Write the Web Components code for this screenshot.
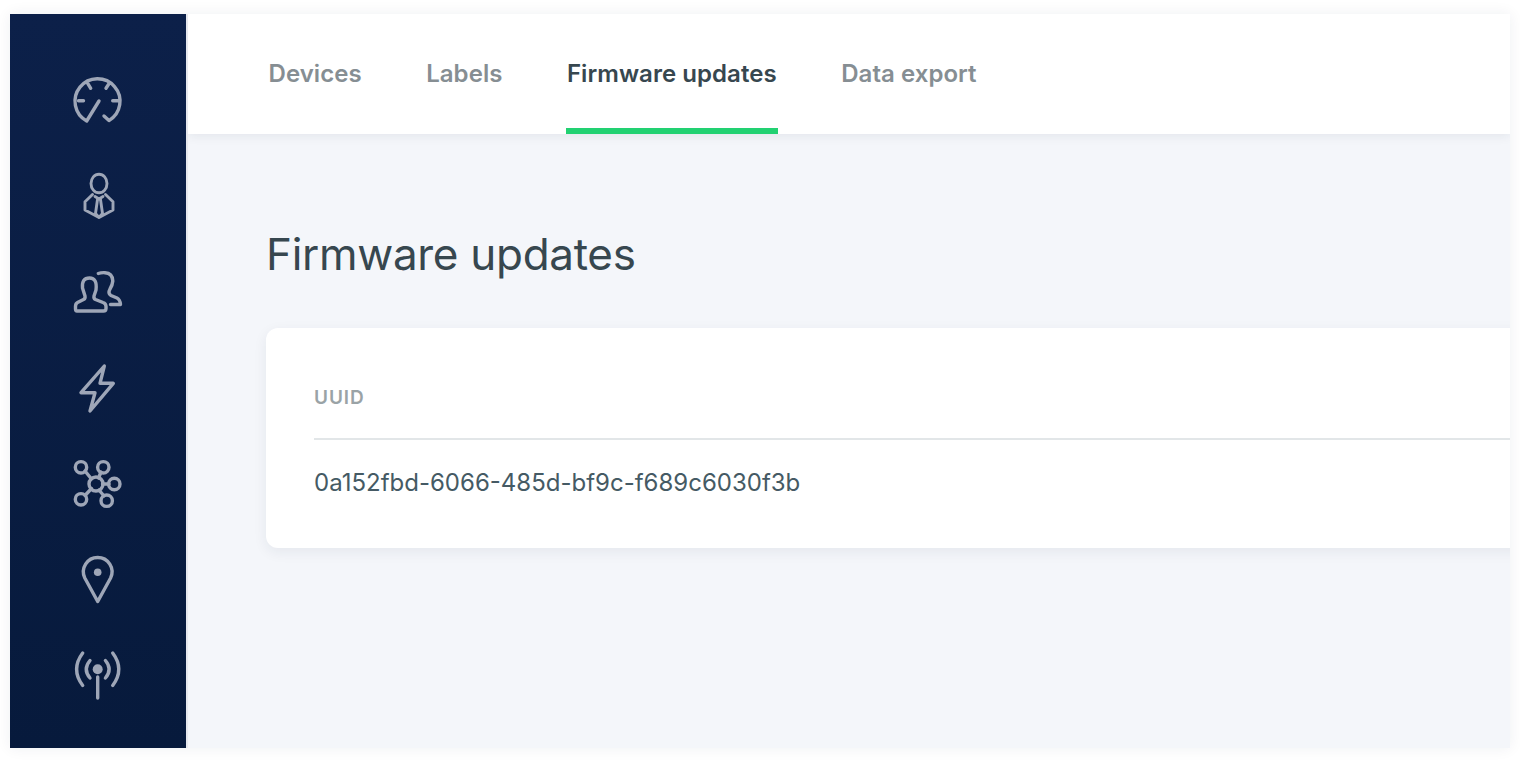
<!DOCTYPE html>
<html><head><meta charset="utf-8"><style>
html,body{margin:0;padding:0;background:#fff;height:760px;overflow:hidden;font-family:Inter,"Liberation Sans",sans-serif}
.f{fill:#9ea6b7;stroke:none}
.t{stroke-width:2.9}
</style></head><body>
<app-window>
<app-sidebar slot="side">
<nav-icon><svg viewBox="0 0 48 48"><path d="M25 25L12.7 45A22.5 22.5 0 1 1 35 44.6L30 40M4.5 24.7H9.5M38.7 24.7H43.7M13.7 7.3L16.7 12.3M35.3 7.3L32 12.3"/></svg></nav-icon>
<nav-icon><svg viewBox="0 0 48 48"><g class="t"><ellipse cx="25" cy="11.5" rx="8" ry="9.3"/><path d="M18.5 22.5L11 29.7V38L25 45.5L39 38V29.7L31.5 22.5M21 24.5L25 27L29 24.5M23.5 27.5L21.5 41.5L25 45.5L28.5 41.5L26.5 27.5"/></g></svg></nav-icon>
<nav-icon><svg viewBox="0 0 48 48"><path d="M2.7 43H29.5Q32 43 32 40.5V38.5Q32 35.5 29 34.5L21.5 31.5Q19.5 30.5 20 28L22 22Q23.5 10 15.5 10Q7.5 10 8.5 20L11 28Q11.5 30.5 9.5 31.5L3.5 34.5Q1.5 35.5 1.5 38.5V41Q1.5 43 3 43"/><path d="M24.3 5.5Q27 4.5 31 4.7Q38.5 5 38.8 13Q38.5 17 36 21Q33.5 25.5 37 27.5L43 30Q46 31.5 46.5 36.5L36.5 36.5"/></svg></nav-icon>
<nav-icon><svg viewBox="0 0 48 48"><path d="M30.3 2L7 28.7H21L16 47L39.3 19.3H26Z"/></svg></nav-icon>
<nav-icon><svg viewBox="0 0 48 48"><circle cx="22" cy="24" r="7"/><circle cx="7" cy="7.3" r="5.7"/><circle cx="29.3" cy="7.3" r="5.7"/><circle cx="40.3" cy="24" r="5.7"/><circle cx="32.7" cy="40.7" r="5.7"/><circle cx="7" cy="39.3" r="5.7"/><path d="M11 11L17.5 19M27 12L24.5 18M28.5 24H35M25 30L30 36M17.5 28.5L11 35.5"/></svg></nav-icon>
<nav-icon><svg viewBox="0 0 48 48"><path d="M23.7 45.5L10.8 22A14.3 14.3 0 1 1 36.6 22Z"/><circle class="f" cx="23.7" cy="16.3" r="3.8"/></svg></nav-icon>
<nav-icon><svg viewBox="0 0 48 48"><circle class="f" cx="23.7" cy="17.3" r="5"/><path d="M23.7 25V46M8.7 1Q-3.5 17.3 8.7 33.5M38.7 1Q50.9 17.3 38.7 33.5M16 8.5Q8.5 17.3 16 26M31.4 8.5Q38.9 17.3 31.4 26"/></svg></nav-icon>
</app-sidebar>
<app-tabs slot="tabs">
<tab-item>Devices</tab-item>
<tab-item>Labels</tab-item>
<tab-item active>Firmware updates</tab-item>
<tab-item>Data export</tab-item>
</app-tabs>
<page-title>Firmware updates</page-title>
<data-card label="UUID">0a152fbd-6066-485d-bf9c-f689c6030f3b</data-card>
</app-window>
<script>
function def(name,html){
  customElements.define(name,class extends HTMLElement{
    constructor(){super();this.attachShadow({mode:'open'}).innerHTML=html(this);}
  });
}
def('app-window',()=>`<style>
:host{display:flex;margin:14px 10px 0;height:734px;width:1500px;box-shadow:0 0 14px rgba(30,40,70,.07);background:#f4f6fa;overflow:hidden}
.main{flex:1;min-width:0;display:flex;flex-direction:column;overflow:hidden}
.content{padding:94px 0 0 78px}
</style><slot name="side"></slot><div class="main"><slot name="tabs"></slot><div class="content"><slot></slot></div></div>`);
def('app-sidebar',()=>`<style>
:host{display:flex;flex-direction:column;align-items:center;flex:none;box-sizing:border-box;width:178px;height:734px;padding-top:62px;gap:48px;background:linear-gradient(#0c2049,#071a3c);background-size:176px 100%;background-repeat:no-repeat;background-color:#e6e8ee}
</style><slot></slot>`);
def('nav-icon',()=>`<style>
:host{display:block;width:48px;height:48px;position:relative;left:-1px}
::slotted(svg){display:block;width:48px;height:48px;fill:none;stroke:#9ea6b7;stroke-width:3.4;stroke-linecap:round;stroke-linejoin:round;overflow:visible}
</style><slot></slot>`);
def('app-tabs',()=>`<style>
:host{display:flex;flex:none;height:120px;padding-left:79.5px;gap:62.5px;background:#fff;box-shadow:0 2px 10px rgba(30,40,70,.08);position:relative}
</style><slot></slot>`);
def('tab-item',(el)=>`<style>
:host{display:block;box-sizing:border-box;height:120px;padding:46px 1px 0;font:600 24px/28px Inter,"Liberation Sans",sans-serif;letter-spacing:.05px;color:#868e93;white-space:nowrap}
:host([active]){color:#37474f;border-bottom:6px solid #22d172}
</style><slot></slot>`);
def('page-title',()=>`<style>
:host{display:block;font:400 44px/52px Inter,"Liberation Sans",sans-serif;letter-spacing:-.3px;color:#37474f;margin-bottom:48px}
</style><slot></slot>`);
def('data-card',(el)=>`<style>
:host{display:block;width:1300px;height:220px;box-sizing:border-box;padding:57px 48px 0;background:#fff;border-radius:12px;box-shadow:0 4px 14px rgba(30,40,70,.07)}
.h{font:600 19px/26px Inter,"Liberation Sans",sans-serif;letter-spacing:.9px;color:#9aa3a6;padding-bottom:27px;border-bottom:2px solid #e2e6e8}
.v{font:400 24px/32px Inter,"Liberation Sans",sans-serif;color:#455a64;padding-top:27px}
</style><div class="h">${el.getAttribute('label')}</div><div class="v"><slot></slot></div>`);
</script>
</body></html>
